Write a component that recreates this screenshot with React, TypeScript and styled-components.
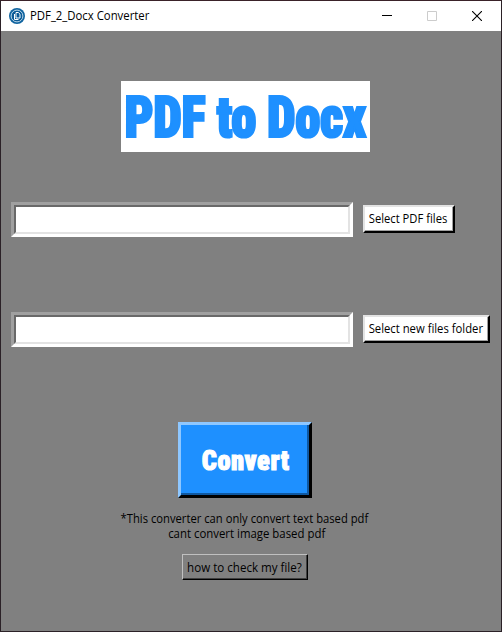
import React from "react";
import styled, { createGlobalStyle } from "styled-components";

const Global = createGlobalStyle`
  * { box-sizing: border-box; }
  body { margin: 0; background: #808080; font-family: "Open Sans", "Noto Sans", sans-serif; }
  button, input { font-family: inherit; }
`;

const Window = styled.main`
  width: 502px;
  height: 632px;
  border: 1px solid #2b2127;
  border-top-color: #3a2229;
  background: #808080;
  display: flex;
  flex-direction: column;
  overflow: hidden;
`;

const TitleBar = styled.header`
  height: 30px;
  flex: none;
  background: #fff;
  display: flex;
  align-items: center;
  padding-left: 8px;
`;

const Label = styled.span<{ $scale?: number }>`
  display: inline-block;
  flex: none;
  font-size: 12px;
  line-height: 15px;
  color: #000;
  white-space: pre;
  transform: scaleX(${(p) => p.$scale ?? 0.935});
`;

const Caption = styled(Label)`
  margin: -1px 0 0 5px;
  transform-origin: left center;
`;

const Controls = styled.div`
  margin-left: auto;
  margin-right: 2px;
  display: flex;
`;

const Control = styled.button`
  width: 45px;
  height: 30px;
  border: 0;
  padding: 0;
  background: transparent;
  display: grid;
  place-items: center;
`;

const Client = styled.section`
  flex: 1;
  display: flex;
  flex-direction: column;
`;

const Heading = styled.h1`
  margin: 50px 0 0 120px;
  width: 249px;
  height: 71px;
  padding-top: 2px;
  background: #fff;
  display: flex;
  align-items: center;
  justify-content: center;
`;

const Display = styled.span<{ $size: number; $scale: number; $color: string; $stroke: number; $track?: number }>`
  display: inline-block;
  flex: none;
  font-family: Roboto, sans-serif;
  font-weight: 900;
  font-stretch: 62.5%;
  font-size: ${(p) => p.$size}px;
  line-height: 1;
  letter-spacing: ${(p) => p.$track ?? 0}px;
  white-space: pre;
  color: ${(p) => p.$color};
  -webkit-text-stroke: ${(p) => p.$stroke}px ${(p) => p.$color};
  transform: scaleX(${(p) => p.$scale});
`;

const Row = styled.div<{ $top: number }>`
  margin: ${(p) => p.$top}px 0 0 10px;
  height: 35px;
  display: flex;
  align-items: flex-start;
  gap: 10px;
`;

const Field = styled.div`
  width: 342px;
  height: 35px;
  flex: none;
  border: 3px solid;
  border-color: #a0a0a0 #fff #fff #a0a0a0;
`;

const Input = styled.input`
  display: block;
  width: 100%;
  height: 100%;
  border: 2px solid;
  border-color: #696969 #e3e3e3 #e3e3e3 #696969;
  border-radius: 0;
  padding: 0 2px;
  background: #fff;
  outline: 0;
`;

const Button = styled.button<{ $w: number }>`
  width: ${(p) => p.$w}px;
  height: 28px;
  margin-top: 3px;
  flex: none;
  padding: 0 2px 2px 0;
  border: 2px solid;
  border-color: #e3e3e3 #000 #000 #e3e3e3;
  background: #fff;
  box-shadow: inset -1px -1px #a0a0a0;
  display: flex;
  align-items: center;
  justify-content: center;
`;

const Convert = styled.button`
  margin: 75px 0 0 177px;
  width: 134px;
  height: 76px;
  padding: 2px 0 0 1px;
  border: 3px solid;
  border-color: #8ec7ff #000 #000 #8ec7ff;
  background: #1e90ff;
  box-shadow: inset -2px -2px #1058a0;
  display: flex;
  align-items: center;
  justify-content: center;
`;

const Note = styled.p`
  margin: 13px 0 0 117px;
  width: 252px;
  display: flex;
  flex-direction: column;
  align-items: center;
`;

const NoteTail = styled(Label)`
  margin-left: 5px;
`;

const Help = styled.button`
  margin: 13px 0 0 181px;
  width: 126px;
  height: 26px;
  padding: 0 2px 0 0;
  border: 1px solid;
  border-color: #c0c0c0 #000 #000 #c0c0c0;
  background: #808080;
  box-shadow: inset -1px -1px #404040;
  display: flex;
  align-items: center;
  justify-content: center;
`;

function AppIcon() {
  return (
    <svg width="16" height="16" viewBox="0 0 16 16" fill="none">
      <circle cx="8" cy="8" r="8" fill="#0f639f" />
      <circle cx="8" cy="8" r="5.9" fill="#0b5a96" stroke="#b9d6e9" strokeWidth="1" />
      <path d="M5.5 6v5.5h4M7 4.5h2.3l1.7 1.7v3.8H7z" stroke="#fff" strokeWidth="1" />
    </svg>
  );
}

export default function App() {
  return (
    <>
      <Global />
      <Window>
        <TitleBar>
          <AppIcon />
          <Caption $scale={0.945}>PDF_2_Docx Converter</Caption>
          <Controls>
            <Control aria-label="Minimize">
              <svg width="10" height="10" shapeRendering="crispEdges"><path d="M0 4.5h10" stroke="#000" /></svg>
            </Control>
            <Control aria-label="Maximize" disabled>
              <svg width="10" height="10"><path d="M.5.5h9v9h-9z" fill="none" stroke="#ccc" /></svg>
            </Control>
            <Control aria-label="Close">
              <svg width="10" height="10"><path d="M0 0l10 10M10 0L0 10" stroke="#000" strokeWidth="1.1" /></svg>
            </Control>
          </Controls>
        </TitleBar>
        <Client>
          <Heading>
            <Display $size={57} $scale={0.893} $color="#1e90ff" $stroke={2.2} $track={-0.5}>PDF to Docx</Display>
          </Heading>
          <Row $top={50}>
            <Field><Input aria-label="PDF files" /></Field>
            <Button $w={92}><Label>Select PDF files</Label></Button>
          </Row>
          <Row $top={75}>
            <Field><Input aria-label="New files folder" /></Field>
            <Button $w={127}><Label $scale={0.94}>Select new files folder</Label></Button>
          </Row>
          <Convert>
            <Display $size={28} $scale={0.94} $color="#fff" $stroke={1.1} $track={0.6}>Convert</Display>
          </Convert>
          <Note>
            <Label>*This converter can only convert text based pdf</Label>
            <NoteTail $scale={0.95}>cant convert image based pdf</NoteTail>
          </Note>
          <Help><Label $scale={0.965}>how to check my file?</Label></Help>
        </Client>
      </Window>
    </>
  );
}
